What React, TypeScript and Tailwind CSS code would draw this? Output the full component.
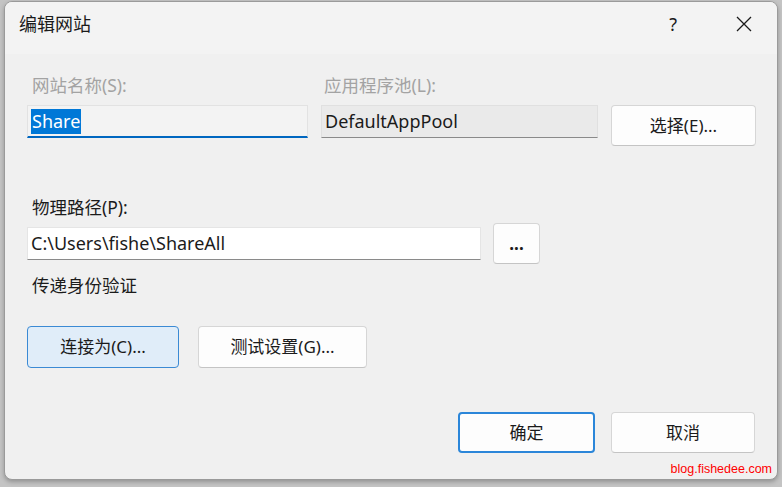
import React from "react";

const F = { fontFamily: '"Segoe UI", "Noto Sans", "Noto Sans CJK SC", sans-serif' };

function Btn({ children, className = "" }: { children: React.ReactNode; className?: string }) {
  return (
    <div
      className={
        "flex items-center justify-center rounded-[4px] text-[17px] text-[#1b1b1b] " + className
      }
    >
      {children}
    </div>
  );
}

export default function App() {
  return (
    <div className="w-[782px] h-[487px] bg-[#c4c4c4] pl-[4px] pt-[1px] pr-[4px] pb-[7px]" style={F}>
      <div className="w-full h-full rounded-[8px] border border-[#9a9a9a] bg-[#f0f0f0] overflow-hidden flex flex-col shadow-[0_2px_4px_rgba(0,0,0,0.25)]">
        {/* title bar */}
        <div className="h-[52px] bg-[#f3f3f3] flex items-center pl-[14px] pr-[22px] pb-[8px] shrink-0">
          <div className="text-[18px] text-[#1a1a1a] flex-1">编辑网站</div>
          <div className="text-[18px] text-[#1a1a1a] mr-[59px]">?</div>
          <svg width="16" height="16" viewBox="0 0 16 16" className="mr-[3px]">
            <path d="M1 1 L15 15 M15 1 L1 15" stroke="#1a1a1a" strokeWidth="1.3" fill="none" />
          </svg>
        </div>
        {/* body */}
        <div className="flex-1 flex flex-col pl-[22px] pr-[21px] relative">
          {/* row 1 */}
          <div className="flex mt-[20px]">
            <div className="flex flex-col w-[281px]">
              <div className="text-[17.5px] text-[#a3a3a3] pl-[5px] leading-[22px]">网站名称(S):</div>
              <div className="mt-[9px] h-[33px] bg-[#f3f3f3] border border-[#e2e2e2] border-b-[2px] border-b-[#0067c0] flex items-center pl-[3px]">
                <span className="bg-[#0078d7] text-white text-[18px] leading-[25px] px-[1px]">Share</span>
              </div>
            </div>
            <div className="flex flex-col w-[277px] ml-[13px]">
              <div className="text-[17.5px] text-[#a3a3a3] pl-[3px] leading-[22px]">应用程序池(L):</div>
              <div className="mt-[9px] h-[33px] bg-[#eaeaea] border border-[#e0e0e0] border-b-[#8a8a8a] flex items-center pl-[3px] text-[18px] text-[#1b1b1b]">
                DefaultAppPool
              </div>
            </div>
            <Btn className="ml-[13px] mt-[31px] w-[145px] h-[41px] bg-[#fdfdfd] border border-[#d6d6d6] border-b-[#c4c4c4]">
              选择(E)...
            </Btn>
          </div>
          {/* physical path */}
          <div className="mt-[50px] text-[17.5px] text-[#1b1b1b] pl-[5px] leading-[22px]">物理路径(P):</div>
          <div className="flex mt-[5px] items-center">
            <div className="w-[454px] h-[33px] bg-white border border-[#e5e5e5] border-b-[#8a8a8a] flex items-center pl-[3px] text-[18px] text-[#1b1b1b]">
              C:\Users\fishe\ShareAll
            </div>
            <Btn className="ml-[12px] w-[47px] h-[41px] bg-[#fdfdfd] border border-[#d6d6d6] border-b-[#c4c4c4] text-[13px] font-bold">
              ...
            </Btn>
          </div>
          <div className="mt-[10px] text-[17.5px] text-[#1b1b1b] pl-[5px] leading-[22px]">传递身份验证</div>
          <div className="flex mt-[30px] gap-[19px]">
            <Btn className="w-[152px] h-[42px] bg-[#e0edf9] border border-[#3b8ad4]">连接为(C)...</Btn>
            <Btn className="w-[169px] h-[42px] bg-[#fdfdfd] border border-[#d6d6d6] border-b-[#c4c4c4]">
              测试设置(G)...
            </Btn>
          </div>
          <div className="flex justify-end mt-[44px] gap-[16px] pr-[1px]">
            <Btn className="w-[137px] h-[41px] bg-[#fdfdfd] border-[2px] border-[#2b86d9]">确定</Btn>
            <Btn className="w-[144px] h-[41px] bg-[#fdfdfd] border border-[#d6d6d6] border-b-[#c4c4c4]">取消</Btn>
          </div>
          <div
            className="absolute right-[5px] bottom-[2px] text-[12.5px] text-[#ff0000] leading-[16px]"
            style={{ fontFamily: '"Liberation Sans", Arial, sans-serif' }}
          >
            blog.fishedee.com
          </div>
        </div>
      </div>
    </div>
  );
}
